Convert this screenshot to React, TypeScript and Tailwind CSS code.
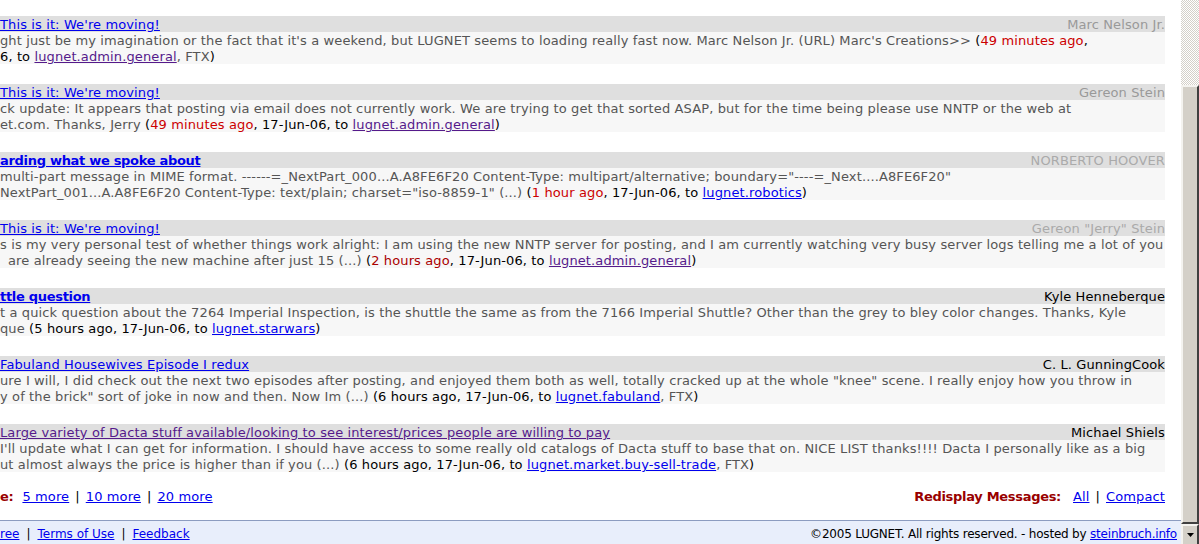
import React from "react";

const BLUE = "text-[#0000ee]";
const PURPLE = "text-[#551a8b]";

function L({ c, children }: { c: "b" | "p"; children: React.ReactNode }) {
  return <a href="#" className={`underline ${c === "b" ? BLUE : PURPLE}`}>{children}</a>;
}

function Sep({ m = "mx-[6px]" }: { m?: string }) {
  return <span className={`${m} text-black`}>|</span>;
}

function Head({ subject, subjectClass, author, authorClass }: { subject: string; subjectClass: string; author: string; authorClass: string }) {
  return (
    <div className="flex h-[16px] items-start justify-between bg-[#dfdfdf] pt-[1px] leading-[16px]">
      <a href="#" className={`underline whitespace-nowrap ${subjectClass}`}>{subject}</a>
      <span className={`whitespace-nowrap ${authorClass}`}>{author}</span>
    </div>
  );
}

function Body({ line1, line2 }: { line1: React.ReactNode; line2: React.ReactNode }) {
  return (
    <div className="bg-[#f7f7f7] text-[#555555] leading-[16px]">
      <div className="h-[16px] whitespace-nowrap pt-[1px]">{line1}</div>
      <div className="h-[16px] whitespace-nowrap pt-[1px]">{line2}</div>
    </div>
  );
}

function Entry(props: {
  subject: string;
  subjectClass: string;
  author: string;
  authorClass: string;
  line1: React.ReactNode;
  line2: React.ReactNode;
  last?: boolean;
}) {
  return (
    <div className={props.last ? "" : "mb-[20px]"}>
      <Head subject={props.subject} subjectClass={props.subjectClass} author={props.author} authorClass={props.authorClass} />
      <Body line1={props.line1} line2={props.line2} />
    </div>
  );
}

const K = ({ children }: { children: React.ReactNode }) => <span className="text-black">{children}</span>;
const R = ({ children, c = "text-[#cc0000]" }: { children: React.ReactNode; c?: string }) => (
  <span className={c}>{children}</span>
);

const BOLD = "font-bold tracking-[-0.3px]";

export default function App() {
  return (
    <div
      className="flex h-[544px] w-[1199px] overflow-hidden bg-white text-[13px] tracking-[0.12px]"
      style={{ fontFamily: '"DejaVu Sans", Verdana, sans-serif' }}
    >
      <div className="flex min-w-0 flex-1 flex-col">
        <div className="pr-[16px] pt-[16px]">
          <Entry
            subject="This is it: We're moving!"
            subjectClass={BLUE}
            author="Marc Nelson Jr."
            authorClass="text-[#999999]"
            line1={
              <>
                ght just be my imagination or the fact that it's a weekend, but LUGNET seems to loading really fast now. Marc Nelson Jr. (URL) Marc's Creations&gt;&gt; <K>(</K>
                <R>49 minutes ago</R>
                <K>,</K>
              </>
            }
            line2={
              <>
                <K>6, to </K>
                <L c="p">lugnet.admin.general</L>, FTX<K>)</K>
              </>
            }
          />
          <Entry
            subject="This is it: We're moving!"
            subjectClass={BLUE}
            author="Gereon Stein"
            authorClass="text-[#999999]"
            line1={
              <>
                ck update: It appears that posting via email does not currently work. We are trying to get that sorted ASAP, but for the time being please use NNTP or the web at
              </>
            }
            line2={
              <>
                et.com. Thanks, Jerry <K>(</K>
                <R>49 minutes ago</R>
                <K>, 17-Jun-06, to </K>
                <L c="p">lugnet.admin.general</L>
                <K>)</K>
              </>
            }
          />
          <Entry
            subject="arding what we spoke about"
            subjectClass={`${BLUE} ${BOLD}`}
            author="NORBERTO HOOVER"
            authorClass="text-[#aaaaaa]"
            line1={
              <>
                multi-part message in MIME format. ------=_NextPart_000...A.A8FE6F20 Content-Type: multipart/alternative; boundary="----=_Next....A8FE6F20"
              </>
            }
            line2={
              <>
                NextPart_001...A.A8FE6F20 Content-Type: text/plain; charset="iso-8859-1" (...) <K>(</K>
                <R>1 hour ago</R>
                <K>, 17-Jun-06, to </K>
                <L c="b">lugnet.robotics</L>
                <K>)</K>
              </>
            }
          />
          <Entry
            subject="This is it: We're moving!"
            subjectClass={BLUE}
            author={'Gereon "Jerry" Stein'}
            authorClass="text-[#aaaaaa]"
            line1={
              <>
                s is my very personal test of whether things work alright: I am using the new NNTP server for posting, and I am currently watching very busy server logs telling me a lot of you
              </>
            }
            line2={
              <>
                <span className="pl-[8px]">are already seeing the new machine after just 15 (...) </span>
                <K>(</K>
                <R c="text-[#aa0000]">2 hours ago</R>
                <K>, 17-Jun-06, to </K>
                <L c="p">lugnet.admin.general</L>
                <K>)</K>
              </>
            }
          />
          <Entry
            subject="ttle question"
            subjectClass={`${BLUE} ${BOLD}`}
            author="Kyle Henneberque"
            authorClass="text-black"
            line1={
              <>
                t a quick question about the 7264 Imperial Inspection, is the shuttle the same as from the 7166 Imperial Shuttle? Other than the grey to bley color changes. Thanks, Kyle
              </>
            }
            line2={
              <>
                que <K>(5 hours ago, 17-Jun-06, to </K>
                <L c="b">lugnet.starwars</L>
                <K>)</K>
              </>
            }
          />
          <Entry
            subject="Fabuland Housewives Episode I redux"
            subjectClass={BLUE}
            author="C. L. GunningCook"
            authorClass="text-black"
            line1={
              <>
                ure I will, I did check out the next two episodes after posting, and enjoyed them both as well, totally cracked up at the whole "knee" scene. I really enjoy how you throw in
              </>
            }
            line2={
              <>
                y of the brick" sort of joke in now and then. Now Im (...) <K>(6 hours ago, 17-Jun-06, to </K>
                <L c="b">lugnet.fabuland</L>, FTX<K>)</K>
              </>
            }
          />
          <Entry
            last
            subject="Large variety of Dacta stuff available/looking to see interest/prices people are willing to pay"
            subjectClass={PURPLE}
            author="Michael Shiels"
            authorClass="text-black"
            line1={
              <>
                I'll update what I can get for information. I should have access to some really old catalogs of Dacta stuff to base that on. NICE LIST thanks!!!! Dacta I personally like as a big
              </>
            }
            line2={
              <>
                ut almost always the price is higher than if you (...) <K>(6 hours ago, 17-Jun-06, to </K>
                <L c="b">lugnet.market.buy-sell-trade</L>, FTX<K>)</K>
              </>
            }
          />

          <div className="mt-[16px] flex h-[16px] items-start justify-between pt-[1px] leading-[16px]">
            <div className="whitespace-nowrap">
              <span className={`${BOLD} text-[#990000]`}>e:</span>
              <span className="ml-[9px]">
                <L c="b">5 more</L>
                <Sep m="mx-[6px]" />
                <L c="b">10 more</L>
                <Sep m="mx-[6px]" />
                <L c="b">20 more</L>
              </span>
            </div>
            <div className="whitespace-nowrap">
              <span className={`${BOLD} text-[#990000]`}>Redisplay Messages:</span>
              <span className="ml-[12px]">
                <L c="b">All</L>
                <Sep m="mx-[6px]" />
                <L c="b">Compact</L>
              </span>
            </div>
          </div>
        </div>

        <div className="mt-[16px] flex h-[30px] items-start justify-between border-t border-[#8c9cc0] bg-[#e8eefb] pr-[4px] pt-[5px] text-[12px] leading-[16px] tracking-normal">
          <div className="whitespace-nowrap">
            <L c="b">ree</L>
            <Sep m="mx-[7px]" />
            <L c="b">Terms of Use</L>
            <Sep m="mx-[7px]" />
            <L c="b">Feedback</L>
          </div>
          <div className="whitespace-nowrap tracking-[-0.2px] text-black">
            ©2005 LUGNET. All rights reserved. - hosted by <L c="b">steinbruch.info</L>
          </div>
        </div>
      </div>

      <div className="flex w-[18px] shrink-0 flex-col">
        <div className="h-[85px] bg-[repeating-conic-gradient(#d4d0c8_0%_25%,#ffffff_0%_50%)] bg-[length:2px_2px]" />
        <div className="flex-1 border-2 border-l-[#f4f3ef] border-t-[#f4f3ef] border-r-[#404040] border-b-[#404040] bg-[#d4d0c8]" />
        <div className="flex h-[20px] items-center justify-center border-l-2 border-t-2 border-r-2 border-l-[#f4f3ef] border-t-[#f4f3ef] border-r-[#404040] bg-[#d4d0c8]">
          <svg width="7" height="4" viewBox="0 0 7 4">
            <path d="M0 0 H7 L3.5 4 Z" fill="#000" />
          </svg>
        </div>
      </div>
    </div>
  );
}
